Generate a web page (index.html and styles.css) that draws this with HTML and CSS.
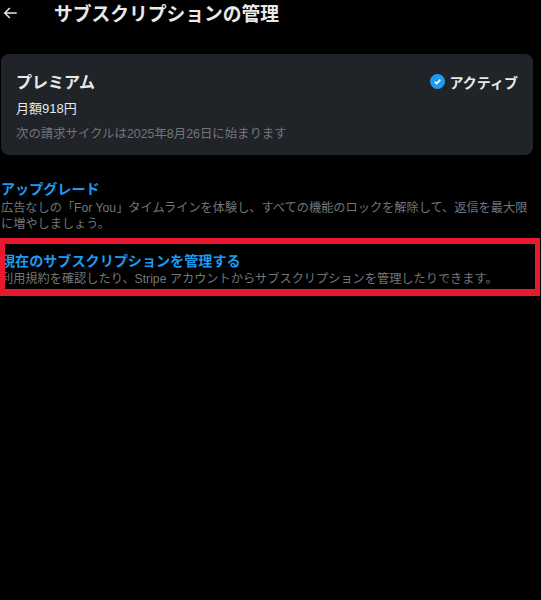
FILE: index.html
```html
<!DOCTYPE html>
<html lang="ja">
<head>
    <meta charset="UTF-8">
    <meta name="viewport" content="width=device-width, initial-scale=1.0">
    <title>サブスクリプションの管理</title>
    <link rel="stylesheet" href="styles.css">
</head>
<body>
    <div class="header">
        <svg class="back-icon" viewBox="0 0 24 24" width="18" height="18">
            <path d="M7.414 13l5.043 5.04-1.414 1.42L3.586 12l7.457-7.46 1.414 1.42L7.414 11H21v2H7.414z"></path>
        </svg>
        <h1>サブスクリプションの管理</h1>
    </div>

    <div class="card">
        <div class="card-top">
            <h2>プレミアム</h2>
            <div class="status">
                <svg class="status-icon" viewBox="0 0 16 16" width="15" height="15">
                    <circle cx="8" cy="8" r="8" fill="#1d9bf0"></circle>
                    <path d="M5 8.3l2.1 2L11 6" fill="none" stroke="#fff" stroke-width="1.7"></path>
                </svg>
                <span>アクティブ</span>
            </div>
        </div>
        <p class="price">月額918円</p>
        <p class="renew">次の請求サイクルは2025年8月26日に始まります</p>
    </div>

    <div class="option upgrade">
        <a href="#">アップグレード</a>
        <p>広告なしの「For You」タイムラインを体験し、すべての機能のロックを解除して、返信を最大限に増やしましょう。</p>
    </div>

    <div class="option manage">
        <a href="#">現在のサブスクリプションを管理する</a>
        <p>利用規約を確認したり、Stripe アカウントからサブスクリプションを管理したりできます。</p>
        <div class="highlight"></div>
    </div>
</body>
</html>
```

FILE: styles.css
```css
html, body {
    min-height: 100vh;
}
body {
    margin: 0;
    background-color: #000;
    color: #e7e9ea;
    font-family: "Liberation Sans", "Noto Sans CJK JP", sans-serif;
}
.header {
    display: flex;
    align-items: center;
    height: 25px;
    padding-left: 1px;
}
.back-icon {
    fill: #e7e9ea;
    margin-right: 35px;
}
h1 {
    margin: 4px 0 0;
    font-size: 18.75px;
    line-height: 25px;
    font-weight: bold;
}
.card {
    margin: 29px 8px 0 1px;
    padding: 17px 15px 14px;
    height: 70px;
    background-color: #202327;
    border-radius: 8px;
}
.card-top {
    display: flex;
    justify-content: space-between;
    align-items: center;
}
h2 {
    margin: 0;
    padding-top: 1px;
    font-size: 16px;
    line-height: 22px;
    font-weight: bold;
}
.status {
    display: flex;
    align-items: center;
    gap: 5px;
    margin-bottom: 2px;
    font-size: 14px;
    font-weight: bold;
}
.price {
    margin: 5px 0 0;
    font-size: 13px;
    line-height: 20px;
}
.renew {
    margin: 6px 0 0;
    font-size: 12.4px;
    line-height: 18px;
    color: #71767b;
}
.option {
    font-size: 12.2px;
    line-height: 16px;
    color: #71767b;
}
.option a {
    display: block;
    margin-bottom: 1px;
    font-size: 14.1px;
    line-height: 18px;
    font-weight: bold;
    color: #1d9bf0;
    text-decoration: none;
}
.option p {
    margin: 0;
}
.upgrade {
    margin: 25px 8px 0 1px;
}
.upgrade a {
    margin-bottom: 2px;
}
.manage {
    position: relative;
    margin: 20px 8px 0 1px;
    padding-bottom: 10px;
}
.highlight {
    position: absolute;
    left: -1px;
    top: -14px;
    box-sizing: border-box;
    width: 540px;
    height: 58px;
    border: 6px solid #e8192f;
    border-bottom-width: 7px;
    border-left-width: 5px;
    border-right-width: 5px;
}
```
